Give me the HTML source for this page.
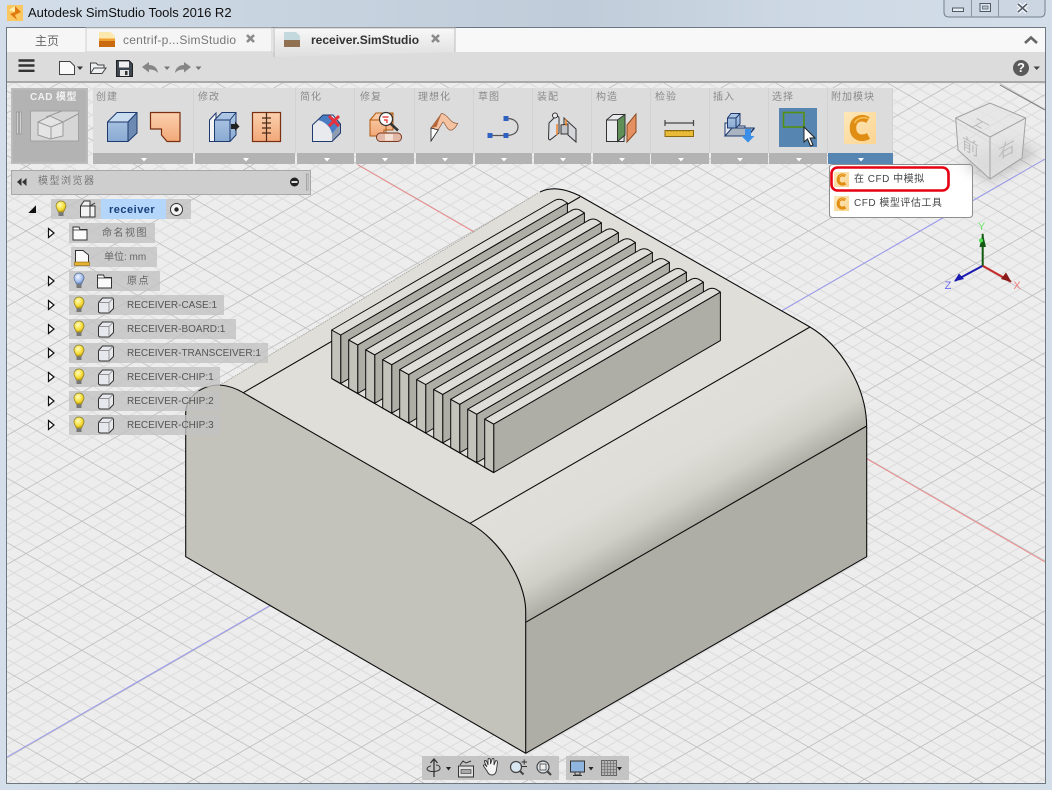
<!DOCTYPE html>
<html><head><meta charset="utf-8"><title>SimStudio</title>
<style>
html,body{margin:0;padding:0;background:#d0dbe7}
#r{position:relative;width:1052px;height:790px;overflow:hidden;font-family:"Liberation Sans","Noto Sans CJK SC",sans-serif}
#r svg.main{position:absolute;left:0;top:0}
.t{position:absolute;white-space:nowrap;line-height:14px;height:14px}
.lb{font-size:10px;color:#8b8b8b;letter-spacing:1px;top:91px}
.row{font-size:10px;color:#555}
.cj{font-size:10px;color:#666;letter-spacing:1.5px}
</style></head><body><div id="r">
<svg class="main" width="1052" height="790" viewBox="0 0 1052 790" xmlns="http://www.w3.org/2000/svg">
<defs>
<linearGradient id="aero" x1="0" x2="1" y1="0" y2="0"><stop offset="0" stop-color="#d3deea"/><stop offset=".25" stop-color="#c8d4e0"/><stop offset=".55" stop-color="#c0ccd9"/><stop offset=".75" stop-color="#cdd8e4"/><stop offset="1" stop-color="#d3dee9"/></linearGradient>
<linearGradient id="fil" gradientUnits="userSpaceOnUse" x1="640" y1="425" x2="696" y2="524"><stop offset="0" stop-color="#e1dfd9"/><stop offset=".45" stop-color="#dfddd7"/><stop offset=".75" stop-color="#cfcfc8"/><stop offset="1" stop-color="#aeaea6"/></linearGradient>
<linearGradient id="tabA" x1="0" x2="0" y1="0" y2="1"><stop offset="0" stop-color="#f8f8f8"/><stop offset="1" stop-color="#dfdfdf"/></linearGradient>
<linearGradient id="blue" x1="0" x2="0" y1="0" y2="1"><stop offset="0" stop-color="#b0c9e6"/><stop offset="1" stop-color="#8aaad2"/></linearGradient>
<linearGradient id="org" x1="0" x2="0" y1="0" y2="1"><stop offset="0" stop-color="#fbd0ae"/><stop offset="1" stop-color="#f2a878"/></linearGradient>
<linearGradient id="cbg" x1="0" x2="1" y1="0" y2="1"><stop offset="0" stop-color="#fde7b8"/><stop offset="1" stop-color="#fbd592"/></linearGradient>
<radialGradient id="bulbY" cx=".4" cy=".35" r=".7"><stop offset="0" stop-color="#fffbc0"/><stop offset=".6" stop-color="#f7e03c"/><stop offset="1" stop-color="#c8a010"/></radialGradient>
<radialGradient id="bulbB" cx=".4" cy=".35" r=".7"><stop offset="0" stop-color="#eef3ff"/><stop offset=".6" stop-color="#a9c3ee"/><stop offset="1" stop-color="#5f7fb8"/></radialGradient>
<pattern id="grid" patternUnits="userSpaceOnUse" width="55.9" height="55.9" patternTransform="matrix(1 .577 1 -.577 696 360)">
<rect width="55.9" height="55.9" fill="#ededed"/>
<g stroke="#dcdcdc" stroke-width="1" fill="none">
<path d="M11.18 0V55.9M22.36 0V55.9M33.54 0V55.9M44.72 0V55.9M0 11.18H55.9M0 22.36H55.9M0 33.54H55.9M0 44.72H55.9"/></g>
<path d="M0 0V55.9M0 0H55.9" stroke="#bcbcbc" stroke-width="1.6" fill="none"/>
</pattern>
<g id="fin" stroke="#0c0c0c" stroke-width="1" stroke-linejoin="round">
<path d="M9 5L235.7-127V-78.5L9 53.5Z" fill="#aeaea6"/>
<path d="M0 0L9 5V53.5L0 48.5Z" fill="#c3c3bb"/>
<path d="M0 0L222-129Q226.7-132 231-130L235.7-127L9 5Z" fill="#e0ded8"/>
</g>
<g id="bulb"><path d="M-5-3a5 5 0 1 1 10 0c0 2.500-2 3.500-2.300 6h-5.400c-.3-2.500-2.300-3.500-2.300-6z" fill="url(#bulbY)" stroke="#8a7a20" stroke-width=".7"/><rect x="-2.500" y="3.500" width="5" height="3.500" fill="#777"/></g>
<g id="bulb2"><path d="M-5-3a5 5 0 1 1 10 0c0 2.500-2 3.500-2.300 6h-5.400c-.3-2.500-2.300-3.500-2.300-6z" fill="url(#bulbB)" stroke="#5a6a90" stroke-width=".7"/><rect x="-2.500" y="3.500" width="5" height="3.500" fill="#777"/></g>
<g id="cube"><path d="M-7.500-3L-3.500-7.500H5.500Q7.500-7.500 7.500-5.500V3L3 7.500H-5.500Q-7.500 7.500-7.500 5.500Z" fill="#e6e8ee" stroke="#333"/><path d="M-7.500-3H3V7.500M3-3L7.500-7.500" fill="none" stroke="#777" stroke-width=".7"/></g>
<g id="folder"><path d="M-7-6.500H-1L0-4H7V6.500H-7Z" fill="#fafafa" stroke="#333"/><path d="M-7-3.500H7" stroke="#333" stroke-width=".8"/></g>
<path id="exp" d="M-2.500-4.500L3 0L-2.500 4.500Z" fill="#fff" stroke="#111" stroke-width="1.200"/>
<g id="clogo"><rect width="32" height="32" fill="url(#cbg)"/><path d="M24 8C17 4 9 7 9 16c0 9 8 12 15.500 8" fill="none" stroke="#e08d14" stroke-width="6.500"/><path d="M24 6.500C19 4.500 13 6 10.500 11" fill="none" stroke="#f5bf55" stroke-width="1.500"/></g>
<filter id="bl" x="-30%" y="-30%" width="160%" height="160%"><feGaussianBlur stdDeviation="7"/></filter>
</defs>

<!-- frame -->
<rect width="1052" height="790" fill="url(#aero)"/>
<rect x="6.500" y="27.500" width="1039" height="756" fill="#ededed" stroke="#6d7782"/>
<rect x="7" y="83" width="1038" height="700" fill="url(#grid)"/>
<path d="M358 165L900 478L1045 562" stroke="#f08a8a" stroke-width="1" fill="none"/>
<path d="M7 757L1045 159" stroke="#9a9af0" stroke-width="1" fill="none"/>
<path d="M1000 85L1045 110" stroke="#777" stroke-width="1" fill="none"/>

<!-- model -->
<path d="M185.700 556.700V413C186 398 200 385 220 385L540 192Q556 184 580 196L810 327C840 345 866 385 866.700 426V556.700L525.700 753.300Z" fill="#e0ded8"/>
<path d="M470 523.300L810 327C840 345 866 385 866.700 426L525.700 622.300V610C525 580 500 540 470 523.300Z" fill="url(#fil)"/>
<path d="M525.700 622.300L866.700 426V556.700L525.700 753.300Z" fill="#aeaea6"/>
<path d="M185.700 556.700V413C186 398 200 385 220 385Q232 386 243.300 392.700L470 523.300C500 540 525 580 525.700 610V753.300Z" fill="#c3c3bb"/>
<path d="M222 384L538 193" stroke="#a9a9a2" stroke-width="1" stroke-dasharray="1.500 1" fill="none"/>
<g fill="none" stroke="#0c0c0c" stroke-width="1.100" stroke-linejoin="round">
<path d="M185.700 413V556.700L525.700 753.300L866.700 556.700V426"/>
<path d="M185.700 413C186 398 200 385 220 385Q232 386 243.300 392.700L470 523.300C500 540 525 580 525.700 610V753.300"/>
<path d="M866.700 426C866 385 840 345 810 327L580 196Q556 184 540 192"/>
<path d="M525.700 622.300L866.700 426M470 523.300L810 327M243.300 392.700L580 197"/>
</g>
<!-- fins -->
<use href="#fin" transform="translate(331.700 330)"/>
<use href="#fin" transform="translate(348.700 339.900)"/>
<use href="#fin" transform="translate(365.700 349.800)"/>
<use href="#fin" transform="translate(382.700 359.700)"/>
<use href="#fin" transform="translate(399.700 369.600)"/>
<use href="#fin" transform="translate(416.700 379.500)"/>
<use href="#fin" transform="translate(433.700 389.400)"/>
<use href="#fin" transform="translate(450.700 399.300)"/>
<use href="#fin" transform="translate(467.700 409.200)"/>
<use href="#fin" transform="translate(484.700 419.100)"/>
<path d="M331.700 378.500L493.700 472.600" stroke="#0c0c0c" stroke-width="1.100"/>

<!-- tab bar -->
<rect x="7" y="28" width="1038" height="25" fill="#f8f8f8"/>
<rect x="7" y="28" width="78" height="24" fill="#f6f6f6"/>
<rect x="86" y="28" width="186" height="24" fill="#f5f5f5" stroke="#cfcfcf"/>
<rect x="7" y="52" width="1038" height="31" fill="#dcdcdc"/>
<rect x="7" y="81" width="1038" height="2" fill="#a9a9a9"/>
<path d="M274 57V28H455V52" fill="url(#tabA)" stroke="#bbb"/>
<!-- tab icons -->
<path d="M99 32H111L115 36V47H99Z" fill="#fbe9b8"/><path d="M99 41H115V47H99Z" fill="#c96a10"/><path d="M99 32H109L115 38V41H99Z" fill="#fce8ac"/><path d="M99 38.500H115V41H99Z" fill="#f0a030"/>
<path d="M284 32H296L300 36V47H284Z" fill="#c3d9dd"/><path d="M284 40H300V47H284Z" fill="#8f7050"/>
<path d="M247 35L254 42M254 35L247 42M432 35L439 42M439 35L432 42" stroke="#8a8a8a" stroke-width="2.600"/>
<path d="M1025 43L1031 37.500L1037 43" fill="none" stroke="#666" stroke-width="2.600"/>

<!-- toolbar -->
<path d="M18.500 60.500H34.500M18.500 65.500H34.500M18.500 70.800H34.500" stroke="#333" stroke-width="2.400"/>
<path d="M59.500 61.500H70L74.500 66V74.500H59.500Z" fill="#fafafa" stroke="#444"/><path d="M77 66.500H83L80 70Z" fill="#333"/>
<path d="M90.500 73.500V63H96L98 65H104V68M90.500 73.500L94 68H106L102 73.500Z" fill="#eef0f2" stroke="#444"/>
<path d="M116.500 60.500H129L132.500 64V76.500H116.500Z" fill="#3e4650" stroke="#222"/><rect x="119" y="61.500" width="10" height="6" fill="#f0f0f0"/><rect x="120" y="70" width="9" height="6" fill="#e6e6e6"/><rect x="125" y="71" width="2.500" height="4" fill="#333"/>
<path d="M142 67L149 62V65C154 65 157.500 68 158 73C155.500 70 152.500 69.500 149 69.500V72.500Z" fill="#868686"/>
<path d="M164 66.500H170L167 70ZM195.500 66.500H201.500L198.500 70Z" fill="#777"/>
<path d="M191 67L184 62V65C179 65 175.500 68 175 73C177.500 70 180.500 69.500 184 69.500V72.500Z" fill="#868686"/>
<circle cx="1021" cy="68" r="8" fill="#5a5a5a"/>
<path d="M1033.500 66.500H1040L1036.700 70Z" fill="#444"/>
<!-- window buttons -->
<path d="M944 0V12Q944 17 949 17H1040Q1045 17 1045 12V0" fill="#ccd6e2" stroke="#75808e"/>
<path d="M971.500 0V17M998.500 0V17" stroke="#8a95a2"/>
<rect x="952.500" y="8" width="11" height="3.500" fill="#e8edf2" stroke="#4f5a66"/>
<rect x="980" y="3.500" width="10.500" height="8" fill="#dde4ec" stroke="#4f5a66"/><rect x="982.500" y="6" width="5.500" height="3" fill="#b9c4d0" stroke="#4f5a66" stroke-width=".7"/>
<path d="M1018 4L1027 12M1027 4L1018 12" stroke="#fff" stroke-width="4"/><path d="M1018 4L1027 12M1027 4L1018 12" stroke="#55606c" stroke-width="1.800"/>
<!-- app icon -->
<rect x="7" y="5" width="16" height="16" fill="#fbc760"/><path d="M15 6L21 12L15 15L17 20L10 14L15 12Z" fill="#e07a10"/><path d="M9 10L15 6L15 12Z" fill="#fff0b0"/>

<!-- ribbon -->
<rect x="11" y="88" width="77" height="76" fill="#b5b5b5"/><rect x="12" y="89" width="75" height="74" fill="#b3b3b3" stroke="#c2c2c2"/>
<rect x="16.500" y="112" width="1.500" height="22" fill="#efefef" stroke="#777" stroke-width=".5"/><rect x="19.500" y="112" width="1.500" height="22" fill="#efefef" stroke="#777" stroke-width=".5"/>
<rect x="30.500" y="111" width="48" height="30" fill="#d6d6d6" stroke="#a2a2a2"/>
<g fill="none" stroke="#9a9a9a"><path d="M38 122L50 116L63 122V136L50 139L38 135Z" fill="#e4e4e4"/><path d="M38 122L51 127V139M51 127L63 122"/><path d="M46 117L62 111M63 122L78 114"/></g>
<g fill="#dcdcdc">
<rect x="93" y="88" width="100" height="65"/><rect x="194" y="88" width="101" height="65"/><rect x="296" y="88" width="58" height="65"/><rect x="355" y="88" width="59" height="65"/><rect x="415" y="88" width="58" height="65"/><rect x="474" y="88" width="58" height="65"/><rect x="533" y="88" width="58" height="65"/><rect x="592" y="88" width="58" height="65"/><rect x="651" y="88" width="58" height="65"/><rect x="710" y="88" width="58" height="65"/><rect x="769" y="88" width="58" height="65"/><rect x="828" y="88" width="65" height="65"/></g>
<path d="M193.500 88V153M295.500 88V153M354.500 88V153M414.500 88V153M473.500 88V153M532.500 88V153M591.500 88V153M650.500 88V153M709.500 88V153M768.500 88V153M827.500 88V153M892.500 88V153" stroke="#d2d2d2"/>
<g fill="#b3b3b3">
<rect x="93" y="153" width="100" height="11"/><rect x="195" y="153" width="100" height="11"/><rect x="297" y="153" width="57" height="11"/><rect x="356" y="153" width="58" height="11"/><rect x="416" y="153" width="57" height="11"/><rect x="475" y="153" width="57" height="11"/><rect x="534" y="153" width="57" height="11"/><rect x="593" y="153" width="57" height="11"/><rect x="651" y="153" width="58" height="11"/><rect x="711" y="153" width="57" height="11"/><rect x="769" y="153" width="58" height="11"/></g>
<rect x="828" y="153" width="65" height="11" fill="#5585b0"/>
<path d="M141 158h6l-3 3.500zM243 158h6l-3 3.500zM324 158h6l-3 3.500zM382 158h6l-3 3.500zM442 158h6l-3 3.500zM501 158h6l-3 3.500zM560 158h6l-3 3.500zM619 158h6l-3 3.500zM678 158h6l-3 3.500zM737 158h6l-3 3.500zM796 158h6l-3 3.500zM858 158h6l-3 3.500z" fill="#fff"/>

<!-- create -->
<path d="M107.500 122L117 112.500H137V133L128 141.500H107.500Z" fill="url(#blue)"/>
<path d="M107.500 122H128L137 112.500H117Z" fill="#c9dcf0"/><path d="M128 122L137 112.500V133L128 141.500Z" fill="#6d8ab2"/>
<path d="M107.500 122L117 112.500H137V133L128 141.500H107.500ZM107.500 122H128V141.500M128 122L137 112.500" fill="none" stroke="#1e3a6e"/>
<path d="M150.500 112.500H180V141.500H167L161.500 135V129H150.500Z" fill="url(#org)" stroke="#7a2f10" stroke-width="1.200" stroke-linejoin="round"/>
<!-- modify -->
<path d="M209.500 120L216 113V141.500H209.500Z" fill="#f4f4f4" stroke="#1e3a6e"/>
<path d="M214.500 120L222 112.500H236V135L230 141.500H214.500Z" fill="url(#blue)" stroke="#1e3a6e"/>
<path d="M214.500 120H230V141.500M230 120L236 112.500" fill="none" stroke="#1e3a6e"/>
<path d="M231 124H235V121.500L239.500 126.500L235 131V129H231Z" fill="#222"/>
<rect x="252.500" y="112.500" width="28" height="29" fill="url(#org)" stroke="#7a2f10" stroke-width="1.200"/>
<path d="M266.500 112.500V141.500M262 118H271M262 123H271M262 128H271M262 133H271" stroke="#4a2a18" stroke-width="1.200"/>
<!-- simplify -->
<path d="M312.500 125L323 115H333L340.500 124V133L332 141.500H312.500Z" fill="#e8eaee"/>
<path d="M323 115H330L340.500 124L332 134C331 128 326 122 318 120Z" fill="#4a7cc4"/>
<path d="M332 134L340.500 124V133L332 141.500Z" fill="#8f9db2"/>
<path d="M312.500 125L323 115H333L340.500 124V133L332 141.500H312.500Z" fill="none" stroke="#1e3a6e"/>
<path d="M329 116L339 126M339 116L329 126" stroke="#e8303a" stroke-width="3"/>
<!-- repair -->
<path d="M370 120L376 113H393V130H384V136H370Z" fill="url(#org)" stroke="#b05a10"/>
<path d="M370 120H386V136M386 120L393 113" fill="none" stroke="#b05a10"/>
<circle cx="386" cy="119" r="6.500" fill="#fff" stroke="#333" stroke-width="1.200"/>
<path d="M390.500 123.500L398 130.500" stroke="#333" stroke-width="2.600"/>
<path d="M382.500 117H388.500M384 120H387V123" stroke="#e02020" stroke-width="1.200" fill="none"/>
<rect x="376.500" y="133" width="25" height="8.500" rx="4" fill="#e4b8a6" stroke="#7a3a20"/>
<rect x="385" y="134" width="8" height="6.500" fill="#f4e0d4"/>
<!-- idealize -->
<path d="M431 128L441.700 113.300C449 115 450 124 457.700 123.300C456 127 453 131 450 130C446 129 445 122 443 122L438 130Z" fill="#f6c3a2" stroke="#8a5a3a" stroke-width=".7"/>
<path d="M431 128L441.700 113.300L438.300 121.700L436.700 126.700Z" fill="#b8693a"/>
<path d="M431 128V141L438.300 130Z" fill="#fff" stroke="#222" stroke-width=".8"/>
<!-- sketch -->
<path d="M490 135.500H506M506 118.500C515 118 518 123 518 127C518 132 514 135.500 506 135.500" fill="none" stroke="#555" stroke-width="1.200"/>
<rect x="487.500" y="133" width="5" height="5" fill="#2f62c0"/><rect x="503.500" y="133" width="5" height="5" fill="#2f62c0"/><rect x="503.500" y="116" width="5" height="5" fill="#2f62c0"/>
<!-- assemble -->
<path d="M549 123L554 118V114C556 116 559 116 559 118V133L550 140L548.500 139Z" fill="#dfe2e6" stroke="#333"/>
<path d="M564 125V118L576 129V142L568 135V127Z" fill="#d4d6da" stroke="#333"/>
<path d="M561 125L568 124V134L561 134Z" fill="#bfc2c6" stroke="#333"/>
<circle cx="555" cy="115.500" r="2.500" fill="#eee" stroke="#333"/>
<path d="M557 124V135M566 119V126" stroke="#f08020" stroke-width="1.400"/>
<!-- construct -->
<path d="M606.500 120L613 114.500H625L624 141.500H606.500Z" fill="#e8eaec" stroke="#333"/>
<path d="M617.500 120L625 114.500V135L617.500 141.500Z" fill="#5f9058" stroke="#333"/>
<path d="M606.500 120H617.500V141.500" fill="none" stroke="#333"/>
<path d="M627 125L636 114V132L627 142Z" fill="#e59060" stroke="#8a4a20"/>
<!-- inspect -->
<path d="M665 120V126M693.500 120V126M665 123H693.500" stroke="#444" stroke-width="1.200"/>
<rect x="665" y="130.500" width="28.500" height="6" fill="#eabb36" stroke="#8a6a10"/>
<path d="M668 130v2M671 130v2M674 130v2M677 130v2M680 130v2M683 130v2M686 130v2M689 130v2" stroke="#8a6a10" stroke-width=".7"/>
<!-- insert -->
<path d="M725 136V123H733L735 126H745V129H754L748 136Z" fill="#e4e8ee" stroke="#1e3a6e"/>
<path d="M725 136L732 128H754L748 136Z" fill="#aab4c0" stroke="#1e3a6e"/>
<path d="M727.500 118L731 113.500H740V124L736 128H727.500Z" fill="url(#blue)" stroke="#1e3a6e"/>
<path d="M727.500 118H736V128M736 118L740 113.500" fill="none" stroke="#1e3a6e"/>
<path d="M745 129H751V136H754.500L748 142.500L741.500 136H745Z" fill="#3a8ee8"/>
<!-- select -->
<rect x="779" y="108" width="38" height="39" fill="#5585b0"/>
<rect x="783.500" y="112.500" width="20.500" height="14.500" fill="none" stroke="#559010" stroke-width="1.600"/>
<path d="M804 127V142L807.500 139L810.500 146L813 145L810 138H815Z" fill="#fff" stroke="#222"/>
<!-- addin -->
<use href="#clogo" transform="translate(844 112)"/>

<!-- browser header -->
<rect x="11.500" y="170.500" width="299" height="24" fill="#cecece" stroke="#a8a8a8"/>
<path d="M21.500 178L17 182L21.500 186ZM26.500 178L22 182L26.500 186Z" fill="#333"/>
<circle cx="294.500" cy="182" r="4.500" fill="#222"/><rect x="291.500" y="181" width="6" height="2" fill="#ddd"/>
<rect x="306.500" y="174" width="1.500" height="16" fill="#ddd" stroke="#777" stroke-width=".5"/>

<!-- tree rows -->
<g fill="#c2c2c2" fill-opacity=".8">
<rect x="51" y="199" width="140" height="20"/><rect x="69" y="223" width="86" height="20"/><rect x="71" y="247" width="86" height="20"/><rect x="69" y="271" width="91" height="20"/><rect x="69" y="295" width="155" height="20"/><rect x="69" y="319" width="167" height="20"/><rect x="69" y="343" width="199" height="20"/><rect x="69" y="367" width="151" height="20"/><rect x="69" y="391" width="151" height="20"/><rect x="69" y="415" width="151" height="20"/></g>
<rect x="101" y="199" width="65" height="20" fill="#b5d6fb"/>
<path d="M29.500 212.500H35.500V206.500Z" fill="#111" stroke="#111"/>
<use href="#exp" transform="translate(51 233)"/><use href="#exp" transform="translate(51 281)"/><use href="#exp" transform="translate(51 305)"/><use href="#exp" transform="translate(51 329)"/><use href="#exp" transform="translate(51 353)"/><use href="#exp" transform="translate(51 377)"/><use href="#exp" transform="translate(51 401)"/><use href="#exp" transform="translate(51 425)"/>
<use href="#bulb" transform="translate(61 209)"/>
<use href="#bulb2" transform="translate(79 281)"/>
<use href="#bulb" transform="translate(79 305)"/><use href="#bulb" transform="translate(79 329)"/><use href="#bulb" transform="translate(79 353)"/><use href="#bulb" transform="translate(79 377)"/><use href="#bulb" transform="translate(79 401)"/><use href="#bulb" transform="translate(79 425)"/>
<path d="M80.500 217V206L84 201H90V206H95V217Z" fill="#f2f2f2" stroke="#333"/><path d="M80.500 206H90V217M90 206L95 203" fill="none" stroke="#333"/>
<circle cx="176.500" cy="209.500" r="6" fill="#f4f4f4" stroke="#333"/><circle cx="176.500" cy="209.500" r="2.200" fill="#222"/>
<use href="#folder" transform="translate(80 233.500)"/><use href="#folder" transform="translate(104.500 281.500)"/>
<path d="M75.500 250.500H83L88.500 255V263H75.500Z" fill="#fafafa" stroke="#333"/><rect x="74.500" y="262" width="15" height="3.500" fill="#e3b030" stroke="#8a6a10" stroke-width=".6"/>
<use href="#cube" transform="translate(106 305.500)"/><use href="#cube" transform="translate(106 329.500)"/><use href="#cube" transform="translate(106 353.500)"/><use href="#cube" transform="translate(106 377.500)"/><use href="#cube" transform="translate(106 401.500)"/><use href="#cube" transform="translate(106 425.500)"/>

<!-- popup -->
<rect x="829.500" y="164.500" width="143" height="53" rx="3" fill="#fff" stroke="#8e8e8e"/>
<rect x="831.500" y="167.500" width="117" height="23" rx="6" fill="none" stroke="#e60012" stroke-width="2.600"/>
<use href="#clogo" transform="translate(834 172) scale(.47)"/>
<use href="#clogo" transform="translate(834 196) scale(.47)"/>

<!-- view cube -->
<path d="M962 160L990 182L1040 152L1010 140Z" fill="#999" opacity=".55" filter="url(#bl)"/>
<path d="M955.700 118L990 103L1025.700 118L1022 158L990 179L958 150Z" fill="#e4e4e4" fill-opacity=".75"/>
<path d="M955.700 118L990 103L1025.700 118L1022 158L990 179L958 150ZM955.700 118L990 137L1025.700 118M990 137V179" fill="none" stroke="#a2a2a2" stroke-width="1"/>

<!-- triad -->
<path d="M982.700 265.700L955 280.700" stroke="#1a1ab0" stroke-width="2"/><path d="M954 281.500L959 273.500L964 279Z" fill="#1a1ab0"/>
<path d="M982.700 265.700L1011 281.700" stroke="#c82a2a" stroke-width="2"/><path d="M1011.500 282L1001 279L1006 272.500Z" fill="#8a1a1a"/>
<path d="M982.700 265.700V234" stroke="#125a12" stroke-width="2"/><path d="M982.700 233L986 247H979.500Z" fill="#125a12"/><circle cx="981" cy="240.500" r="2" fill="#4de04d"/>
<text x="981.500" y="230" font-family="Liberation Sans" font-size="11" fill="#6fe86f" text-anchor="middle">Y</text>
<text x="948" y="289" font-family="Liberation Sans" font-size="11" fill="#6a6af0" text-anchor="middle">Z</text>
<text x="1017" y="289" font-family="Liberation Sans" font-size="11" fill="#f08080" text-anchor="middle">X</text>
<text transform="matrix(1 .55 0 1 962 148)" font-family="Liberation Sans,Noto Sans CJK SC" font-size="17" fill="#bcbcbc">前</text>
<text transform="matrix(1 -.55 0 1 998 160)" font-family="Liberation Sans,Noto Sans CJK SC" font-size="17" fill="#bcbcbc">右</text>
<text transform="matrix(1 .55 1 -.55 976 118)" font-family="Liberation Sans,Noto Sans CJK SC" font-size="14" fill="#bcbcbc">上</text>

<!-- bottom nav -->
<rect x="422" y="756" width="137" height="24" fill="#c4c4c4"/><rect x="566" y="756" width="63" height="24" fill="#c4c4c4"/>
<path d="M434 759V777M430.500 763L434 759L437.500 763" fill="none" stroke="#333" stroke-width="1.300"/><path d="M440 768C441 772 428 773 427 769C427 767 430 766 431 766M440 768C440 766 438 765 436 765" fill="none" stroke="#333"/>
<path d="M446 767h5l-2.500 3.500zM588.500 767h5l-2.500 3.500zM617 767h5l-2.500 3.500z" fill="#222"/>
<rect x="458.500" y="766" width="15" height="11" fill="#e2e2e2" stroke="#333"/><rect x="461" y="769.500" width="10" height="4" fill="#aaa" stroke="#333" stroke-width=".6"/><path d="M460 765L463 761L466 763L471 761" fill="none" stroke="#333"/>
<path d="M487 767L484.500 762C484 760 486 760 487 762L488 765V760C488 758 490 758 490.500 760V764L492 759.500C492 758 494 758 494 760V765L495.500 761C496 760 497.500 761 497.500 762L496.500 770C496 773 494.500 775 492 775C489 775 488 773 487 771L483.500 766C483 764.500 485 764 487 767Z" fill="#f4f4f4" stroke="#333" stroke-width=".9"/>
<circle cx="516" cy="767" r="5.500" fill="#d8e6f2" stroke="#444" stroke-width="1.200"/><path d="M520 771L523.500 774.500" stroke="#444" stroke-width="2"/><path d="M521.500 762H527M524.200 759.500V764.500M521.500 766.500H527" stroke="#333"/>
<circle cx="543" cy="767" r="6" fill="#dde4ea" stroke="#444" stroke-width="1.200"/><rect x="540" y="764" width="6" height="6" fill="#eee" stroke="#444" stroke-width=".8"/><path d="M547.500 771.500L551 775" stroke="#444" stroke-width="2.200"/>
<rect x="570.500" y="761" width="14" height="11" fill="#8fb4de" stroke="#333"/><path d="M575 772.500V775H580V772.500M573 775.500H582" stroke="#333" fill="none"/>
<rect x="601.500" y="760.500" width="15" height="15" fill="#b6b6b6" stroke="#666"/><path d="M604.500 760.500V775.500M607.500 760.500V775.500M610.500 760.500V775.500M613.500 760.500V775.500M601.500 763.500H616.500M601.500 766.500H616.500M601.500 769.500H616.500M601.500 772.500H616.500" stroke="#777" stroke-width=".8"/>
</svg>

<div class="t" style="left:28px;top:6px;font-size:13px;color:#111">Autodesk SimStudio Tools 2016 R2</div>
<div class="t" style="left:35px;top:34px;font-size:12px;color:#666">主页</div>
<div class="t" style="left:123px;top:33px;font-size:12px;color:#777;letter-spacing:.25px">centrif-p...SimStudio</div>
<div class="t" style="left:311px;top:33px;font-size:12px;font-weight:bold;color:#333">receiver.SimStudio</div>
<div class="t" style="left:1017px;top:61px;font-size:13px;font-weight:bold;color:#fff">?</div>

<div class="t" style="left:30px;top:91px;font-size:10px;font-weight:bold;color:#f0f0f0;letter-spacing:.4px">CAD 模型</div>
<div class="t lb" style="left:96px">创建</div>
<div class="t lb" style="left:198px">修改</div>
<div class="t lb" style="left:300px">简化</div>
<div class="t lb" style="left:360px">修复</div>
<div class="t lb" style="left:418px">理想化</div>
<div class="t lb" style="left:478px">草图</div>
<div class="t lb" style="left:537px">装配</div>
<div class="t lb" style="left:596px">构造</div>
<div class="t lb" style="left:655px">检验</div>
<div class="t lb" style="left:713px">插入</div>
<div class="t lb" style="left:772px">选择</div>
<div class="t lb" style="left:831px">附加模块</div>

<div class="t cj" style="left:38px;top:175px;color:#777">模型浏览器</div>
<div class="t" style="left:109px;top:203px;font-size:11px;font-weight:bold;color:#17407a;letter-spacing:.5px">receiver</div>
<div class="t cj" style="left:102px;top:227px">命名视图</div>
<div class="t row" style="left:104px;top:251px;color:#666">单位: mm</div>
<div class="t cj" style="left:127px;top:275px">原点</div>
<div class="t row" style="left:127px;top:299px">RECEIVER-CASE:1</div>
<div class="t row" style="left:127px;top:323px">RECEIVER-BOARD:1</div>
<div class="t row" style="left:127px;top:347px">RECEIVER-TRANSCEIVER:1</div>
<div class="t row" style="left:127px;top:371px">RECEIVER-CHIP:1</div>
<div class="t row" style="left:127px;top:395px">RECEIVER-CHIP:2</div>
<div class="t row" style="left:127px;top:419px">RECEIVER-CHIP:3</div>

<div class="t" style="left:854px;top:173px;font-size:10px;color:#444;letter-spacing:.5px">在 CFD 中模拟</div>
<div class="t" style="left:854px;top:197px;font-size:10px;color:#444;letter-spacing:.5px">CFD 模型评估工具</div>
</div></body></html>
